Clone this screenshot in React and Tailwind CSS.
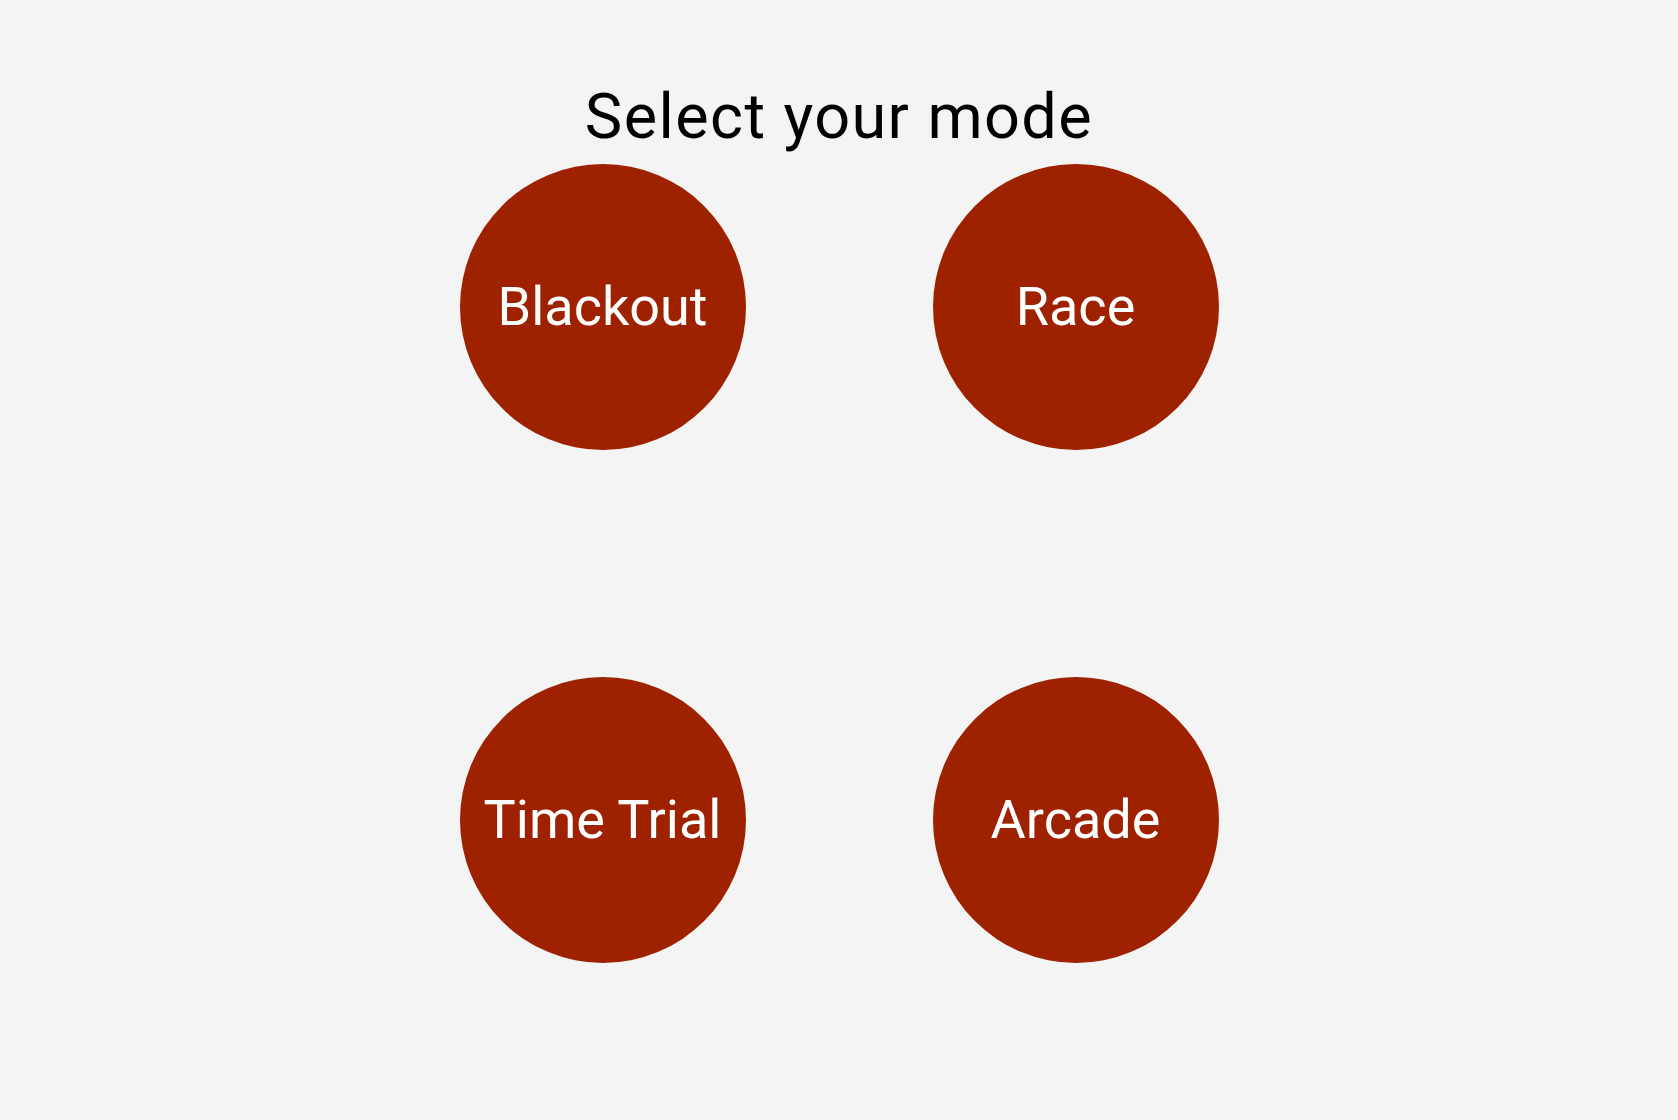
import React from "react";

const modes = ["Blackout", "Race", "Time Trial", "Arcade"];

const App = () => {
  return (
    <div className="min-h-screen w-full bg-[#f4f4f4] font-['Roboto',sans-serif] flex flex-col items-center pt-[85px]">
      <h1 className="text-[63px] leading-none tracking-[1.4px] text-black mb-[16px]">
        Select your mode
      </h1>
      <div className="grid grid-cols-2 gap-x-[187px] gap-y-[227px]">
        {modes.map((m) => (
          <button
            key={m}
            className="w-[286px] h-[286px] rounded-full bg-[#9e2200] text-white text-[54px] leading-none flex items-center justify-center"
          >
            {m}
          </button>
        ))}
      </div>
    </div>
  );
};

export default App;
